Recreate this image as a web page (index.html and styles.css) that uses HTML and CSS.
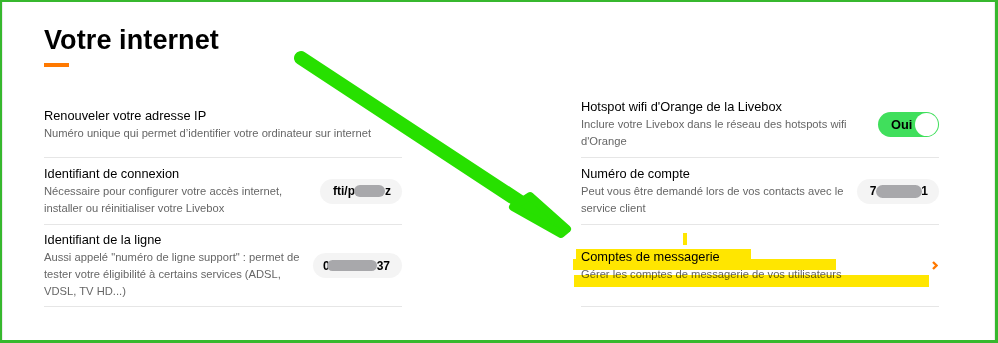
FILE: index.html
```html
<!DOCTYPE html>
<html lang="fr">
<head>
    <meta charset="UTF-8">
    <meta name="viewport" content="width=device-width, initial-scale=1.0">
    <title>Votre internet</title>
    <link rel="stylesheet" href="styles.css">
</head>
<body>
    <div class="frame">
        <h1 class="page-title">Votre internet</h1>
        <div class="title-bar"></div>

        <div class="settings">
            <div class="item">
                <div class="item-text">
                    <div class="item-title">Renouveler votre adresse IP</div>
                    <div class="item-desc">Numéro unique qui permet d’identifier votre ordinateur sur internet</div>
                </div>
            </div>

            <div class="item">
                <div class="item-text">
                    <div class="item-title">Hotspot wifi d'Orange de la Livebox</div>
                    <div class="item-desc">Inclure votre Livebox dans le réseau des hotspots wifi d'Orange</div>
                </div>
                <div class="toggle">
                    <span class="toggle-label">Oui</span>
                    <span class="toggle-knob"></span>
                </div>
            </div>

            <div class="item">
                <div class="item-text">
                    <div class="item-title">Identifiant de connexion</div>
                    <div class="item-desc">Nécessaire pour configurer votre accès internet, installer ou réinitialiser votre Livebox</div>
                </div>
                <div class="pill pill-login">fti/p<span class="blob blob-sm"></span>z</div>
            </div>

            <div class="item">
                <div class="item-text">
                    <div class="item-title">Numéro de compte</div>
                    <div class="item-desc">Peut vous être demandé lors de vos contacts avec le service client</div>
                </div>
                <div class="pill pill-account">7<span class="blob blob-md"></span>1</div>
            </div>

            <div class="item item-tall">
                <div class="item-text">
                    <div class="item-title">Identifiant de la ligne</div>
                    <div class="item-desc">Aussi appelé "numéro de ligne support" : permet de tester votre éligibilité à certains services (ADSL, VDSL, TV HD...)</div>
                </div>
                <div class="pill pill-line">0<span class="blob blob-lg"></span>37</div>
            </div>

            <div class="item item-tall">
                <div class="item-text">
                    <div class="item-title">Comptes de messagerie</div>
                    <div class="item-desc">Gérer les comptes de messagerie de vos utilisateurs</div>
                </div>
                <svg class="chevron" width="6" height="9" viewBox="0 0 6 9">
                    <polyline points="1,1 4.5,4.5 1,8" fill="none" stroke="#ff7900" stroke-width="2.3"/>
                </svg>
            </div>
        </div>
    </div>

    <!-- annotations drawn over the screenshot -->
    <svg class="marks" width="998" height="343" viewBox="0 0 998 343">
        <g class="highlight" fill="#ffe600">
            <rect x="683" y="233" width="4" height="12"/>
            <rect x="576" y="249" width="175" height="11"/>
            <rect x="573" y="259" width="263" height="11"/>
            <rect x="574" y="275" width="355" height="12"/>
        </g>
        <g fill="#27e000" stroke="#27e000" stroke-linecap="round" stroke-linejoin="round">
            <line x1="301" y1="58" x2="540" y2="215" stroke-width="14"/>
            <polygon points="513,207 530,196 567,229 561,234" stroke-width="8"/>
        </g>
    </svg>
</body>
</html>
```

FILE: styles.css
```css
body {
    margin: 0;
    position: relative;
    width: 998px;
    height: 343px;
    font-family: "Liberation Sans", Arial, Helvetica, sans-serif;
    background-color: #ffffff;
    color: #000000;
    overflow: hidden;
}

.frame {
    box-sizing: border-box;
    width: 998px;
    height: 343px;
    border: 3px solid #37b82e;
    border-top-width: 2px;
    border-left-width: 2px;
    box-shadow: inset 1px 0 0 #ececec, inset -1px 0 0 #ececec;
    padding: 23px 0 0 42px;
}

.page-title {
    margin: 0;
    font-size: 27px;
    line-height: 31px;
    font-weight: 700;
    letter-spacing: 0.1px;
}

.title-bar {
    width: 25px;
    height: 4px;
    margin-top: 7px;
    background-color: #ff7900;
}

.settings {
    display: grid;
    grid-template-columns: 358px 358px;
    column-gap: 179px;
    margin-top: 24px;
}

.item {
    display: flex;
    align-items: center;
    justify-content: space-between;
    gap: 10px;
    padding: 7px 0;
    border-bottom: 1px solid #e6e6e6;
}

.item-tall {
    padding: 6px 0;
}

.item-title {
    font-size: 12.8px;
    line-height: 18px;
    color: #000000;
}

.item-desc {
    font-size: 11.2px;
    line-height: 17px;
    color: #666666;
}

.pill {
    display: inline-flex;
    align-items: center;
    flex-shrink: 0;
    height: 25px;
    padding: 0 11px 0 13px;
    border-radius: 13px;
    background-color: #f4f4f4;
    font-size: 12px;
    font-weight: 700;
}

.pill-line {
    padding: 0 12px 0 10px;
}

.pill-account {
    padding: 0 11px 0 13px;
}

.blob {
    display: inline-block;
    background-color: #a8a8ab;
    border-radius: 7px;
}

.blob-sm {
    width: 31px;
    height: 12px;
    margin-left: -1px;
}

.blob-md {
    width: 46px;
    height: 13px;
    margin-right: -1px;
}

.blob-lg {
    width: 50px;
    height: 11px;
    margin-left: -3px;
}

.toggle {
    display: inline-flex;
    align-items: center;
    justify-content: space-between;
    flex-shrink: 0;
    box-sizing: border-box;
    width: 61px;
    height: 25px;
    padding: 0 1px 0 13px;
    border-radius: 13px;
    background-color: #40df5c;
}

.toggle-label {
    font-size: 12.8px;
    font-weight: 700;
}

.toggle-knob {
    width: 23px;
    height: 23px;
    border-radius: 50%;
    background-color: #ffffff;
}

.chevron {
    flex-shrink: 0;
    margin-right: 1px;
}

.marks {
    position: absolute;
    top: 0;
    left: 0;
    pointer-events: none;
}

.highlight {
    mix-blend-mode: multiply;
}
```
